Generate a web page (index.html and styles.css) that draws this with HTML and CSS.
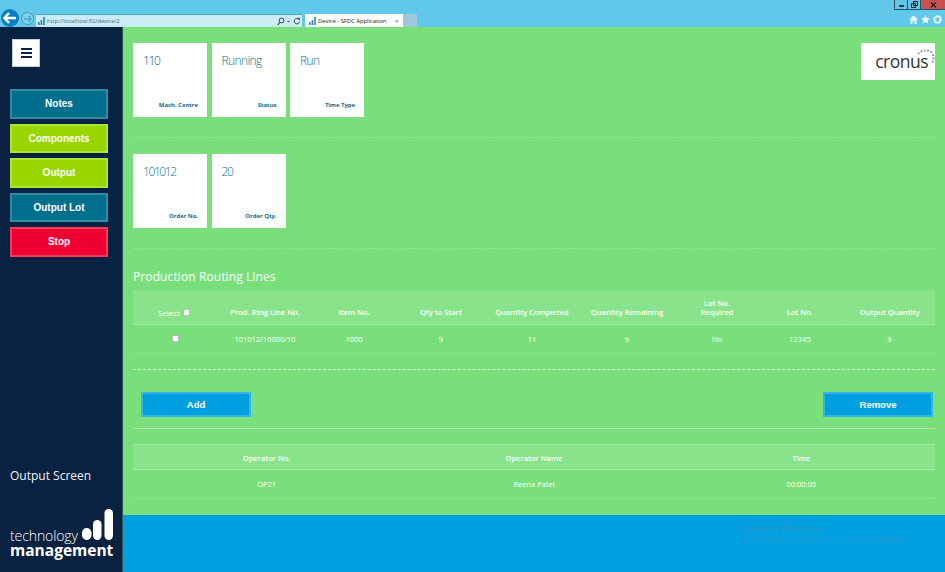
FILE: index.html
```html
<!DOCTYPE html>
<html lang="en">
<head>
    <meta charset="UTF-8">
    <meta name="viewport" content="width=device-width, initial-scale=1.0">
    <link rel="stylesheet" href="styles.css">
    <title>Device - SFDC Application</title>
</head>
<body>
    <header class="browser">
        <div class="browser-nav">
            <span class="nav-back">
                <svg width="14" height="12" viewBox="0 0 14 12"><path d="M6 1 1.500 6 6 11M2 6h11" fill="none" stroke="#fff" stroke-width="2.400"/></svg>
            </span>
            <span class="nav-forward">
                <svg width="9" height="8" viewBox="0 0 10 8"><path d="M6 .5 9 4 6 7.500M9 4H1" fill="none" stroke="#3f9cc4" stroke-width="1.200"/></svg>
            </span>
            <div class="address">
                <svg class="signal" width="7" height="8" viewBox="0 0 7 8"><path d="M0 5h1.600v3H0zM2.600 3h1.600v5H2.600zM5.200 0h1.600v8H5.200z" fill="#2a7fb8"/></svg>
                <span class="address-url">http://localhost:82/device/2</span>
                <svg class="address-tools" width="24" height="9" viewBox="0 0 24 9"><circle cx="4.500" cy="3.400" r="2.400" fill="none" stroke="#444" stroke-width="1"/><path d="M2.600 5.400.8 8" stroke="#444" stroke-width="1.200"/><path d="M10 4h3l-1.500 1.600z" fill="#555"/><path d="M22 2.500a2.700 2.700 0 1 0 .6 2.200" fill="none" stroke="#444" stroke-width="1"/><path d="M20.500 .5 23 1l-.5 2.500z" fill="#444"/></svg>
            </div>
            <div class="tab">
                <svg class="signal" width="7" height="8" viewBox="0 0 7 8"><path d="M0 5h1.600v3H0zM2.600 3h1.600v5H2.600zM5.200 0h1.600v8H5.200z" fill="#2a7fb8"/></svg>
                <span class="tab-title">Device - SFDC Application</span>
                <span class="tab-close">×</span>
            </div>
            <div class="tab-new"></div>
        </div>
        <div class="browser-right">
            <div class="window-controls">
                <span class="win-btn"><svg width="7" height="5" viewBox="0 0 7 5"><path d="M1 4h5" stroke="#111" stroke-width="1.500"/></svg></span>
                <span class="win-btn"><svg width="7" height="7" viewBox="0 0 7 7"><path d="M2.500.5h4v4h-4zM.5 2.500h4v4h-4z" fill="none" stroke="#111"/></svg></span>
                <span class="win-btn win-close"><svg width="7" height="6" viewBox="0 0 7 6"><path d="M1 .5l5 5M6 .5l-5 5" stroke="#222" stroke-width="1.300"/></svg></span>
            </div>
            <div class="browser-tools">
                <svg width="9" height="9" viewBox="0 0 9 9"><path d="M4.500.5 9 4.500H7.500V9H5.500V6h-2v3h-2V4.500H0z" fill="#eef9fd"/></svg>
                <svg width="9" height="9" viewBox="0 0 9 9"><path d="M4.500 0l1.300 3 3.200.3-2.400 2.100.7 3.200-2.800-1.700L1.700 8.600l.7-3.200L0 3.300 3.200 3z" fill="#eef9fd"/></svg>
                <svg width="9" height="9" viewBox="0 0 9 9"><circle cx="4.500" cy="4.500" r="3" fill="none" stroke="#eef9fd" stroke-width="1.400"/><circle cx="4.500" cy="4.500" r="4.100" fill="none" stroke="#eef9fd" stroke-width="1" stroke-dasharray="1.500 1.300"/></svg>
            </div>
        </div>
    </header>

    <div class="app">
        <aside class="sidebar">
            <button class="menu-toggle">
                <span></span><span></span><span></span>
            </button>
            <nav class="side-nav">
                <a class="side-btn side-btn--teal">Notes</a>
                <a class="side-btn side-btn--lime">Components</a>
                <a class="side-btn side-btn--lime">Output</a>
                <a class="side-btn side-btn--teal">Output Lot</a>
                <a class="side-btn side-btn--red">Stop</a>
            </nav>
            <div class="screen-name">Output Screen</div>
            <div class="brand">
                <div class="brand-top">
                    <span class="brand-light">technology</span>
                    <svg width="33" height="32" viewBox="0 0 33 32"><rect x="1" y="19" width="9.500" height="12" rx="4.700" fill="#fff"/><rect x="12" y="11" width="8.500" height="20" rx="4.200" fill="#fff"/><rect x="23.500" y="0" width="8.500" height="31" rx="4.200" fill="#fff"/></svg>
                </div>
                <div class="brand-bold">management</div>
            </div>
        </aside>

        <div class="content">
            <main class="main">
                <section class="tiles-row">
                    <div class="tile">
                        <div class="tile-value tile-value--num tile-value--dark">110</div>
                        <div class="tile-label">Mach. Centre</div>
                    </div>
                    <div class="tile">
                        <div class="tile-value">Running</div>
                        <div class="tile-label">Status</div>
                    </div>
                    <div class="tile">
                        <div class="tile-value">Run</div>
                        <div class="tile-label">Time Type</div>
                    </div>
                    <div class="logo">
                        <span class="logo-text">cronus</span>
                        <svg class="logo-dots" width="18" height="18" viewBox="0 0 18 18"><path d="M1 5C4 1 11 0 15 4c2 3 2 7 0 10" fill="none" stroke="#999" stroke-width="2" stroke-dasharray="1.800 1.600"/></svg>
                    </div>
                </section>
                <hr class="rule-dashed rule-faint">
                <section class="tiles-row tiles-row--second">
                    <div class="tile">
                        <div class="tile-value tile-value--num">101012</div>
                        <div class="tile-label">Order No.</div>
                    </div>
                    <div class="tile">
                        <div class="tile-value tile-value--num">20</div>
                        <div class="tile-label">Order Qty.</div>
                    </div>
                </section>
                <hr class="rule-dashed rule-faint">

                <h2 class="section-title">Production Routing Lines</h2>
                <table class="grid grid-lines">
                    <colgroup>
                        <col class="c-select"><col class="c-prod"><col class="c-item"><col class="c-qty">
                        <col class="c-done"><col class="c-left"><col class="c-req"><col class="c-lot"><col>
                    </colgroup>
                    <thead>
                        <tr>
                            <th class="select-head">Select <span class="check"></span></th>
                            <th>Prod. Rtng Line No.</th>
                            <th>Item No.</th>
                            <th>Qty to Start</th>
                            <th>Quantity Completed</th>
                            <th>Quantity Remaining</th>
                            <th>Lot No.<br>Required</th>
                            <th>Lot No.</th>
                            <th class="last-head">Output Quantity</th>
                        </tr>
                    </thead>
                    <tbody>
                        <tr>
                            <td><span class="check check--row"></span></td>
                            <td>101012/10000/10</td>
                            <td>1000</td>
                            <td>9</td>
                            <td>11</td>
                            <td>9</td>
                            <td>No</td>
                            <td>12345</td>
                            <td>9</td>
                        </tr>
                    </tbody>
                </table>
                <hr class="rule-dashed rule-actions">
                <div class="actions">
                    <button class="action-btn">Add</button>
                    <button class="action-btn">Remove</button>
                </div>
                <hr class="rule-solid">
                <table class="grid grid-operators">
                    <thead>
                        <tr>
                            <th>Operator No.</th>
                            <th>Operator Name</th>
                            <th>Time</th>
                        </tr>
                    </thead>
                    <tbody>
                        <tr>
                            <td>OP21</td>
                            <td>Reena Patel</td>
                            <td>00:00:05</td>
                        </tr>
                    </tbody>
                </table>
            </main>
            <footer class="footer">
                <div class="activate">
                    <div class="activate-title">Activate Windows</div>
                    <div class="activate-sub">Go to System in Control Panel to activate Windows.</div>
                </div>
            </footer>
        </div>
    </div>
</body>
</html>
```

FILE: styles.css
```css
* {
    box-sizing: border-box;
}

html, body {
    margin: 0;
    height: 572px;
    overflow: hidden;
}

body {
    display: flex;
    flex-direction: column;
    font-family: "Open Sans", sans-serif;
    background-color: #78df7a;
}

/* browser chrome */
.browser {
    display: flex;
    justify-content: space-between;
    flex: none;
    height: 27px;
    background-color: #62c8e9;
}

.browser-nav {
    display: flex;
    align-items: flex-end;
    padding-left: 1px;
}

.nav-back {
    display: flex;
    align-items: center;
    justify-content: center;
    width: 18px;
    height: 18px;
    border-radius: 50%;
    background-color: #0a7fc4;
}

.nav-forward {
    display: flex;
    align-items: center;
    justify-content: center;
    width: 13px;
    height: 13px;
    margin: 0 2px 2px 2px;
    border: 1px solid #3f9cc4;
    border-radius: 50%;
    background-color: #7dd2ee;
}

.address {
    display: flex;
    align-items: center;
    width: 266px;
    height: 13px;
    padding: 0 1px 0 2px;
    border-top: 1px solid #4ba6c8;
    background-color: #c9ecf7;
}

.address-url {
    flex: 1;
    margin-left: 2px;
    font-size: 6px;
    letter-spacing: -.15px;
    color: #55707c;
}

.tab {
    display: flex;
    align-items: center;
    width: 98px;
    height: 13px;
    margin-left: 3px;
    padding: 0 4px;
    background-color: #fff;
}

.tab-title {
    flex: 1;
    margin-left: 2px;
    font-size: 6px;
    letter-spacing: -.1px;
    white-space: nowrap;
    color: #222;
}

.tab-close {
    font-size: 8px;
    line-height: 1;
    color: #777;
}

.tab-new {
    width: 14px;
    height: 13px;
    background-color: #9cc8dc;
}

.browser-right {
    display: flex;
    flex-direction: column;
    align-items: flex-end;
}

.window-controls {
    display: flex;
    height: 10px;
    border-bottom: 1px solid #2b4f60;
    border-left: 1px solid #2b4f60;
}

.win-btn {
    display: flex;
    align-items: center;
    justify-content: center;
    width: 13px;
    border-right: 1px solid #2b4f60;
}

.win-close {
    width: 24px;
    border-right: 0;
    background-color: #c75050;
}

.browser-tools {
    display: flex;
    gap: 3px;
    padding: 5px 3px 0 0;
}

/* layout */
.app {
    display: flex;
    flex: 1;
    min-height: 0;
}

.sidebar {
    display: flex;
    flex-direction: column;
    flex: none;
    width: 123px;
    padding: 12px 0 14px 10px;
    border-right: 1px solid #2f5a55;
    background-color: #0a2242;
}

.menu-toggle {
    display: flex;
    flex-direction: column;
    align-items: center;
    justify-content: center;
    gap: 2px;
    width: 28px;
    height: 28px;
    margin-left: 2px;
    padding: 0;
    border: 1px solid #c8cdd4;
    background-color: #fff;
}

.menu-toggle span {
    width: 11px;
    height: 2px;
    background-color: #0a2242;
}

.side-nav {
    display: flex;
    flex-direction: column;
    gap: 5px;
    margin-top: 22px;
}

.side-btn {
    display: flex;
    align-items: center;
    justify-content: center;
    width: 98px;
    height: 29.500px;
    border: 2px solid;
    font-family: "Liberation Sans", sans-serif;
    font-size: 10px;
    font-weight: bold;
    color: #fff;
}

.side-btn--teal {
    border-color: #338ba5;
    background-color: #006f8e;
}

.side-btn--lime {
    border-color: #b0e23a;
    background-color: #99d600;
}

.side-btn--red {
    border-color: #f53a60;
    background-color: #ef0033;
}

.screen-name {
    margin-top: auto;
    font-size: 12px;
    color: #f0f2f5;
}

.brand {
    margin-top: 25px;
    color: #fff;
}

.brand-top {
    display: flex;
    align-items: flex-end;
    height: 32px;
}

.brand-light {
    width: 71px;
    font-size: 14px;
    font-weight: 300;
    line-height: 13px;
    letter-spacing: -.1px;
    margin-bottom: -1px;
}

.brand-bold {
    margin-top: 1px;
    font-size: 15.500px;
    font-weight: 700;
    line-height: 16px;
}

.content {
    display: flex;
    flex-direction: column;
    flex: 1;
    min-width: 0;
}

.main {
    flex: 1;
    padding: 16px 10px 0;
}

.footer {
    display: flex;
    justify-content: flex-end;
    flex: none;
    height: 57px;
    padding: 8px 41px 0 0;
    background-color: #00a0e0;
}

.activate {
    color: #2f96cb;
}

.activate-title {
    font-size: 10px;
    line-height: 12px;
}

.activate-sub {
    font-size: 6.900px;
    line-height: 10px;
}

/* tiles */
.tiles-row {
    display: flex;
    gap: 4.500px;
    height: 74px;
}

.tile {
    display: flex;
    flex-direction: column;
    justify-content: space-between;
    width: 74px;
    height: 74px;
    padding: 9px 9px 8px 10px;
    background-color: #fff;
}

.tile-value {
    font-size: 12px;
    font-weight: 300;
    line-height: 17px;
    letter-spacing: -.6px;
    color: #0d7390;
}

.tile-value--num {
    letter-spacing: -1.400px;
}

.tile-value--dark {
    color: #005f80;
}

.tile-label {
    font-size: 6px;
    font-weight: 700;
    line-height: 8px;
    letter-spacing: -.05px;
    text-align: right;
    color: #0a6f8e;
}

.logo {
    position: relative;
    display: flex;
    align-items: center;
    justify-content: flex-end;
    width: 74px;
    height: 37px;
    margin-left: auto;
    padding: 0 7px 0 0;
    background-color: #fff;
}

.logo-text {
    font-size: 17.500px;
    line-height: 1;
    letter-spacing: -.5px;
    margin-top: 1px;
    color: #333;
}

.logo-dots {
    position: absolute;
    top: 6px;
    right: 0;
}

/* rules */
hr {
    margin: 0;
    border: 0;
}

.rule-dashed {
    height: 1px;
    margin-top: 20px;
    border-top: 1px dashed #d5f2d6;
}

.rule-faint {
    border-top-color: #8ce58e;
}

.tiles-row--second {
    margin-top: 16px;
}

.rule-solid {
    height: 1px;
    border-top: 1px solid #b6dfb4;
}

.section-title {
    margin: 20px 0 6px;
    font-size: 12px;
    font-weight: 400;
    line-height: 15px;
    letter-spacing: .1px;
    color: #fff;
}

/* grids */
.grid {
    width: 802px;
    border-collapse: collapse;
    table-layout: fixed;
    font-size: 7.500px;
    color: #fff;
}

.grid th {
    padding: 0;
    font-weight: 600;
    line-height: 9px;
    background-color: #88e38a;
    border-bottom: 1px solid #a4eaa5;
}

.grid td {
    padding: 0;
    text-align: center;
    border-bottom: 1px solid #8ce48e;
}

.grid-lines th {
    padding-bottom: 7px;
    vertical-align: bottom;
}

.grid-lines thead tr {
    height: 34px;
}

.grid-lines tbody tr {
    height: 29px;
}

.c-select { width: 83px; }
.c-prod { width: 98px; }
.c-item { width: 80px; }
.c-qty { width: 94px; }
.c-done { width: 88px; }
.c-left { width: 102px; }
.c-req { width: 78px; }
.c-lot { width: 88px; }

.select-head {
    font-size: 8px;
    font-weight: 400 !important;
}

.last-head {
    border-left: 1px solid #84e186;
}

.check {
    display: inline-block;
    width: 7px;
    height: 7px;
    margin: 0 1px 0 1px;
    vertical-align: -0.5px;
    border: 1px solid #bbb;
    background-color: #fff;
}

.check--row {
    margin: 0 0 0 2px;
}

.grid-operators {
    margin-top: 15px;
}

.grid-operators th {
    padding-top: 3px;
    border-top: 1px solid #a4eaa5;
}

.grid-operators td {
    padding-top: 1px;
}

.grid-operators thead tr {
    height: 25px;
}

.grid-operators tbody tr {
    height: 29px;
}

.rule-actions {
    margin-top: 15px;
}

.actions {
    display: flex;
    justify-content: space-between;
    padding: 22px 2px 11px 8px;
}

.action-btn {
    width: 110px;
    height: 25px;
    padding: 0;
    border: 2px solid #33b3e6;
    font-family: "Liberation Sans", sans-serif;
    font-size: 9.500px;
    font-weight: bold;
    color: #fff;
    background-color: #00a0e0;
}
```
